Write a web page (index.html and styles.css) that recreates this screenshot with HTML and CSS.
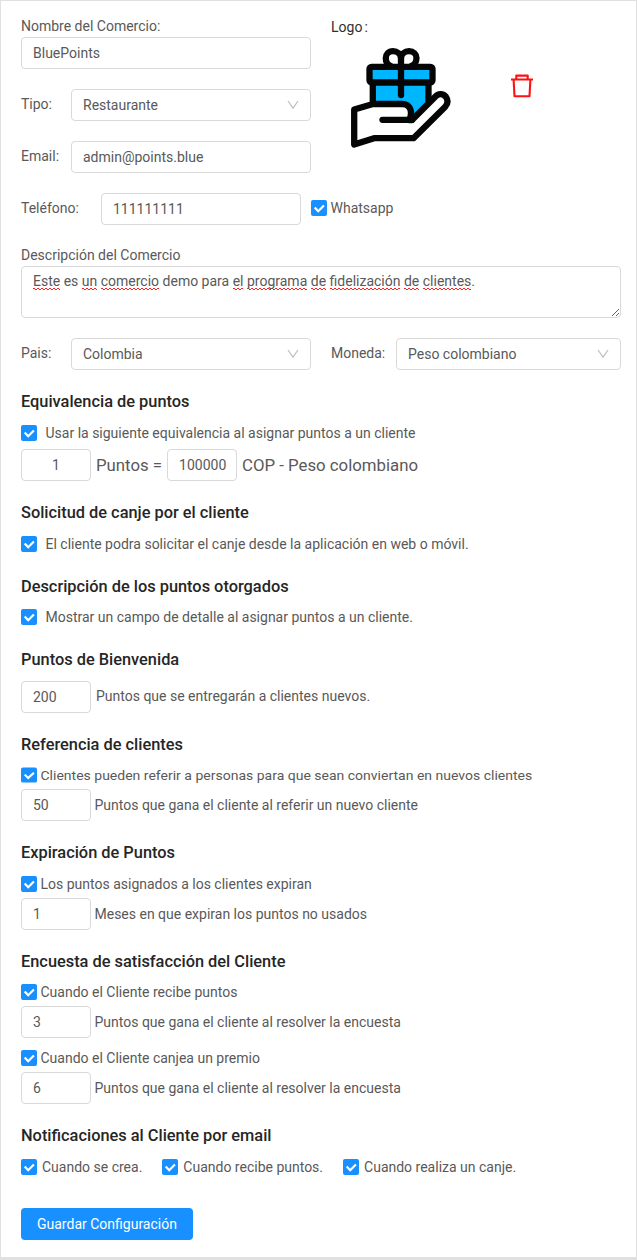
FILE: index.html
```
<!DOCTYPE html>
<html lang="es">
<head>
<meta charset="utf-8">
<title>Configuración del Comercio</title>
<link rel="stylesheet" href="styles.css">
</head>
<body>
<svg width="0" height="0" class="defs">
  <symbol id="check" viewBox="0 0 16 16"><path d="M3.700 7.600 7.200 11.200 12.900 5.500" fill="none" stroke="#fff" stroke-width="2.200"/></symbol>
  <symbol id="down" viewBox="0 0 12 12"><path d="M1 2 6 9.200 11 2" fill="none" stroke="#bfbfbf" stroke-width="1.200"/></symbol>
</svg>
<main class="card">
  <div class="top">
    <div class="fields">
      <div class="label">Nombre del Comercio:</div>
      <div class="input">BluePoints</div>
      <div class="field"><span class="name">Tipo:</span><div class="input select">Restaurante<svg class="arrow"><use href="#down"/></svg></div></div>
      <div class="field"><span class="name">Email:</span><div class="input">admin@points.blue</div></div>
    </div>
    <div class="logo-col">
      <div class="logo-label">Logo<span class="colon">:</span></div>
      <div class="logo-row">
        <svg class="logo" viewBox="11 8 100 100" fill="none" stroke="#050505" stroke-width="6.300" stroke-linecap="round" stroke-linejoin="round">
          <path fill="#00b7ff" d="M32.800 42.300H88.500V64L72 81H32.800Z"/>
          <rect fill="#00b7ff" x="29.500" y="26.800" width="63" height="15.500" rx="2"/>
          <path d="M61 55V19C61 13.500 57 11.200 53 11.200C48.500 11.200 45.800 14.500 45.800 18C45.800 22 48 25 50.500 26M61 19C61 13.500 65 11.200 69 11.200C73.500 11.200 76.500 14.500 76.500 18C76.500 22 74 25 71.500 26"/>
          <path fill="#fff" d="M14.200 69.500 33 64H62C68 64 71 68 71 73Q71 77 69 80H72L95 57C98 53.500 103 53 106 57C108.300 60.500 107.800 64 105 67L73.500 98.200H34L14.200 104.500Z"/>
          <path d="M42.500 79.800H72"/>
        </svg>
        <svg class="trash" viewBox="0 0 24 24" fill="none" stroke="#f11" stroke-width="2.100" stroke-linejoin="round"><path d="M1 5.500H23M3.600 5.500 4.500 22.300H19.500L20.400 5.500M6.300 5V1.600H17.700V5"/></svg>
      </div>
    </div>
  </div>
  <div class="field phone"><span class="name">Teléfono:</span><div class="input">111111111</div><label class="check"><svg><use href="#check"/></svg><span>Whatsapp</span></label></div>
  <div class="label desc-label">Descripción del Comercio</div>
  <div class="area"><u>Este</u> es <u>un</u> <u>comercio</u> demo para <u>el</u> <u>programa</u> <u>de</u> <u>fidelización</u> <u>de</u> <u>clientes</u>.</div>
  <div class="field pair"><span class="name">Pais:</span><div class="input select">Colombia<svg class="arrow"><use href="#down"/></svg></div><span class="name currency">Moneda:</span><div class="input select">Peso colombiano<svg class="arrow"><use href="#down"/></svg></div></div>

  <h2>Equivalencia de puntos</h2>
  <label class="check wide"><svg><use href="#check"/></svg><span>Usar la siguiente equivalencia al asignar puntos a un cliente</span></label>
  <div class="points large"><div class="input small center">1</div><span>Puntos =</span><div class="input small">100000</div><span>COP - Peso colombiano</span></div>

  <h2>Solicitud de canje por el cliente</h2>
  <label class="check wide"><svg><use href="#check"/></svg><span>El cliente podra solicitar el canje desde la aplicación en web o móvil.</span></label>

  <h2>Descripción de los puntos otorgados</h2>
  <label class="check wide tight"><svg><use href="#check"/></svg><span>Mostrar un campo de detalle al asignar puntos a un cliente.</span></label>

  <h2>Puntos de Bienvenida</h2>
  <div class="points welcome"><div class="input small">200</div><span>Puntos que se entregarán a clientes nuevos.</span></div>

  <h2>Referencia de clientes</h2>
  <label class="check tight short"><svg><use href="#check"/></svg><span>Clientes pueden referir a personas para que sean conviertan en nuevos clientes</span></label>
  <div class="points"><div class="input small">50</div><span>Puntos que gana el cliente al referir un nuevo cliente</span></div>

  <h2>Expiración de Puntos</h2>
  <label class="check"><svg><use href="#check"/></svg><span>Los puntos asignados a los clientes expiran</span></label>
  <div class="points"><div class="input small">1</div><span>Meses en que expiran los puntos no usados</span></div>

  <h2>Encuesta de satisfacción del Cliente</h2>
  <label class="check tight"><svg><use href="#check"/></svg><span>Cuando el Cliente recibe puntos</span></label>
  <div class="points"><div class="input small">3</div><span>Puntos que gana el cliente al resolver la encuesta</span></div>
  <label class="check tight"><svg><use href="#check"/></svg><span>Cuando el Cliente canjea un premio</span></label>
  <div class="points"><div class="input small">6</div><span>Puntos que gana el cliente al resolver la encuesta</span></div>

  <h2>Notificaciones al Cliente por email</h2>
  <div class="notices">
    <label class="check"><svg><use href="#check"/></svg><span>Cuando se crea.</span></label>
    <label class="check"><svg><use href="#check"/></svg><span>Cuando recibe puntos.</span></label>
    <label class="check"><svg><use href="#check"/></svg><span>Cuando realiza un canje.</span></label>
  </div>
  <button class="save">Guardar Configuración</button>
</main>
</body>
</html>
```
FILE: styles.css
```
* { box-sizing: border-box; }
body { margin: 0; background: #fff; color: #595959; font: 14px/22px Roboto, sans-serif; }
.defs { display: block; }
.card { height: 1260px; padding: 14px 15px 0 20px; border: 1px solid #e0e0e0; border-bottom-width: 3px; }
.top { display: grid; grid-template-columns: 290px 1fr; gap: 20px; }
.input { height: 32px; padding: 0 11px; border: 1px solid #d9d9d9; border-radius: 4px; line-height: 30px; white-space: nowrap; background: #fff; }
.field { display: flex; margin-top: 20px; }
.field .name { width: 50px; line-height: 30px; flex: none; }
.field .input { flex: 1; }
.select { display: flex; justify-content: space-between; align-items: center; }
.arrow { width: 12px; height: 12px; }
.logo-label { margin-top: 1px; color: #303030; }
.colon { margin-left: 2px; }
.logo-row { display: flex; align-items: flex-start; padding: 10px 0 0 20px; gap: 59px; }
.logo { width: 100px; height: 100px; }
.trash { width: 24px; height: 24px; margin-top: 26px; }
.phone .name { width: 80px; }
.phone .input { flex: none; width: 200px; margin-right: 10px; }
.phone .check { margin-top: 4px; }
.desc-label { margin-top: 19px; }
.area { height: 52px; width: 600px; padding: 3px 11px; border: 1px solid #d9d9d9; border-radius: 4px; overflow: auto; resize: vertical; }
/* Zigzag spell-check marks */
.area u {
  padding-bottom: 1px;
  text-decoration: none;
  background-image:
    linear-gradient(45deg, transparent 38%, #f22 42%, #f22 58%, transparent 62%),
    linear-gradient(-45deg, transparent 38%, #f22 42%, #f22 58%, transparent 62%);
  background-size: 4px 2px, 4px 2px;
  background-position: 0 100%, 2px 100%;
  background-repeat: repeat-x;
}
.pair .input { flex: 0 0 240px; }
.pair .currency { width: 65px; margin-left: 20px; }
.pair .currency + .input { flex-basis: 225px; }
h2 { margin: 21px 0 -1px; font-size: 16.380px; line-height: 22px; font-weight: 500; color: #262626; }
.check { display: flex; align-items: center; height: 22px; margin-top: 10px; gap: 3.500px; }
.check svg { width: 16px; height: 16px; border-radius: 2px; background: #1890ff; flex: none; }
.check.wide { gap: 8.500px; }
.check.tight { margin-top: 9px; }
.check.short { transform: scaleY(0.94); }
.points { display: flex; gap: 3.500px; margin-top: 3px; line-height: 32px; }
.small { width: 70px; }
.center { text-align: center; }
.points.large { gap: 5px; margin-top: 5px; }
.large > span { font-size: 16.800px; }
.points.welcome { gap: 5px; margin-top: 11px; line-height: 30px; }
.notices { display: flex; gap: 20px; }
.notices .check { gap: 5px; }
.save { display: block; height: 32px; margin-top: 30px; padding: 0 16px; border: 0; border-radius: 4px; background: #1890ff; color: #fff; font: inherit; }
```
